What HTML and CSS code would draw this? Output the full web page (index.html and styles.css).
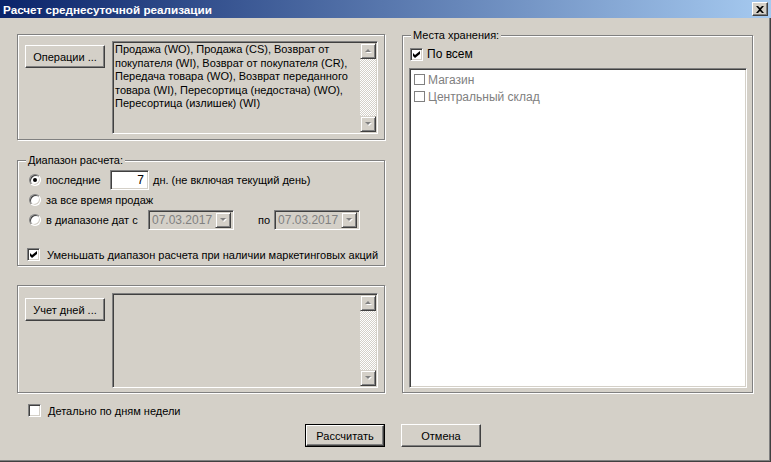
FILE: index.html
```html
<!DOCTYPE html>
<html lang="ru">
<head>
    <meta charset="UTF-8">
    <title>Расчет среднесуточной реализации</title>
    <link rel="stylesheet" href="styles.css">
</head>
<body>
<div class="window">
    <div class="titlebar">
        <span class="title">Расчет среднесуточной реализации</span>
        <span class="close">
            <svg width="8" height="7" viewBox="0 0 8 7"><path d="M0 0h2l2 2 2-2h2l-3 3.5 3 3.5h-2l-2-2-2 2h-2l3-3.5z" fill="#000"/></svg>
        </span>
    </div>

    <div class="client">
        <div class="columns">
            <div class="left">
                <!-- операции -->
                <div class="group ops">
                    <span class="btn side-btn">Операции ...</span>
                    <div class="field memo">
                        <div class="memo-text">
                            Продажа (WO), Продажа (CS), Возврат от<br>
                            покупателя (WI), Возврат от покупателя (CR),<br>
                            Передача товара (WO), Возврат переданного<br>
                            товара (WI), Пересортица (недостача) (WO),<br>
                            Пересортица (излишек) (WI)
                        </div>
                        <div class="vscroll">
                            <span class="sb-btn"><svg width="7" height="5" viewBox="0 0 7 5"><path d="M4 1l3 3H1z" fill="#fff"/><path d="M3 0l3 3H0z" fill="#808080"/></svg></span>
                            <span class="sb-track"></span>
                            <span class="sb-btn"><svg width="7" height="5" viewBox="0 0 7 5"><path d="M1 1h6L4 4z" fill="#fff"/><path d="M0 0h6L3 3z" fill="#808080"/></svg></span>
                        </div>
                    </div>
                </div>

                <!-- диапазон -->
                <div class="group range">
                    <span class="caption">Диапазон расчета:</span>
                    <div class="row">
                        <label class="opt opt-last"><span class="radio checked"></span>последние</label>
                        <span class="field days-input">7</span>
                        <span class="hint">дн. (не включая текущий день)</span>
                    </div>
                    <div class="row">
                        <label class="opt"><span class="radio"></span>за все время продаж</label>
                    </div>
                    <div class="row">
                        <label class="opt opt-dates"><span class="radio"></span>в диапазоне дат с</label>
                        <span class="field combo"><span class="combo-text">07.03.2017</span><span class="sb-btn"><svg width="7" height="5" viewBox="0 0 7 5"><path d="M1 1h6L4 4z" fill="#fff"/><path d="M0 0h6L3 3z" fill="#808080"/></svg></span></span>
                        <span class="to">по</span>
                        <span class="field combo"><span class="combo-text">07.03.2017</span><span class="sb-btn"><svg width="7" height="5" viewBox="0 0 7 5"><path d="M1 1h6L4 4z" fill="#fff"/><path d="M0 0h6L3 3z" fill="#808080"/></svg></span></span>
                    </div>
                    <label class="check-row promo">
                        <span class="chk"><svg width="7" height="7" viewBox="0 0 7 7"><path d="M0 2l2 2 5-4v3l-5 4-2-2z" fill="#000"/></svg></span>
                        Уменьшать диапазон расчета при наличии маркетинговых акций
                    </label>
                </div>

                <!-- учет дней -->
                <div class="group days">
                    <span class="btn side-btn">Учет дней ...</span>
                    <div class="field memo">
                        <div class="memo-text"></div>
                        <div class="vscroll">
                            <span class="sb-btn"><svg width="7" height="5" viewBox="0 0 7 5"><path d="M4 1l3 3H1z" fill="#fff"/><path d="M3 0l3 3H0z" fill="#808080"/></svg></span>
                            <span class="sb-track"></span>
                            <span class="sb-btn"><svg width="7" height="5" viewBox="0 0 7 5"><path d="M1 1h6L4 4z" fill="#fff"/><path d="M0 0h6L3 3z" fill="#808080"/></svg></span>
                        </div>
                    </div>
                </div>
            </div>

            <!-- места хранения -->
            <div class="group stores">
                <span class="caption">Места хранения:</span>
                <label class="check-row all">
                    <span class="chk"><svg width="7" height="7" viewBox="0 0 7 7"><path d="M0 2l2 2 5-4v3l-5 4-2-2z" fill="#000"/></svg></span>
                    По всем
                </label>
                <ul class="field store-list">
                    <li><span class="flat-chk"></span>Магазин</li>
                    <li><span class="flat-chk"></span>Центральный склад</li>
                </ul>
            </div>
        </div>

        <label class="check-row weekdays">
            <span class="chk"></span>
            Детально по дням недели
        </label>

        <div class="actions">
            <span class="btn default">Рассчитать</span>
            <span class="btn">Отмена</span>
        </div>
    </div>
</div>
</body>
</html>
```

FILE: styles.css
```css
* {
    margin: 0;
    padding: 0;
    box-sizing: border-box;
}

ul {
    list-style: none;
}

body {
    font: 11px "Liberation Sans", Arial, sans-serif;
    color: #000;
    background: #d4d0c8;
}

.window {
    width: 771px;
    height: 462px;
    background: #d4d0c8;
    box-shadow: inset -1px -1px #404040, inset -2px -2px #808080;
}

/* заголовок окна */
.titlebar {
    height: 18px;
    display: flex;
    align-items: center;
    justify-content: space-between;
    padding: 0 3px 0 3px;
    background: linear-gradient(to right, #0a246a, #a6caf0);
}

.title {
    color: #fff;
    font-weight: bold;
    font-size: 11.7px;
}

.close {
    width: 16px;
    height: 14px;
    display: flex;
    align-items: center;
    justify-content: center;
    background: #d4d0c8;
    border: 1px solid;
    border-color: #fff #404040 #404040 #fff;
    box-shadow: inset -1px -1px #808080;
}

.client {
    padding: 16px 0 0 17px;
}

.columns {
    display: flex;
    gap: 17px;
    align-items: flex-start;
}

.left {
    width: 368px;
    display: flex;
    flex-direction: column;
}

/* рамка группы */
.group {
    position: relative;
    border: 1px solid #808080;
    box-shadow: inset 1px 1px #fff, 1px 1px #fff;
}

.caption {
    position: absolute;
    top: -7px;
    left: 8px;
    padding: 0 2px;
    line-height: 13px;
    background: #d4d0c8;
}

/* кнопки */
.btn {
    display: flex;
    align-items: center;
    justify-content: center;
    width: 80px;
    height: 23px;
    background: #d4d0c8;
    border: 1px solid;
    border-color: #fff #404040 #404040 #fff;
    box-shadow: inset -1px -1px #808080;
}

.btn.default {
    width: 78px;
    height: 21px;
    margin: 1px;
    outline: 1px solid #000;
}

.side-btn {
    flex: none;
}

/* утопленное поле */
.field {
    background: #fff;
    border: 1px solid;
    border-color: #808080 #fff #fff #808080;
    box-shadow: inset 1px 1px #404040, inset -1px -1px #d4d0c8;
}

.memo {
    display: flex;
    width: 266px;
    background: #d4d0c8;
    padding: 1px;
}

.memo-text {
    flex: 1;
    padding: 0 1px;
    line-height: 13.5px;
    white-space: nowrap;
}

.vscroll {
    width: 16px;
    display: flex;
    flex-direction: column;
}

.sb-btn {
    flex: none;
    width: 16px;
    height: 16px;
    display: flex;
    align-items: center;
    justify-content: center;
    background: #d4d0c8;
    border: 1px solid;
    border-color: #d4d0c8 #404040 #404040 #d4d0c8;
    box-shadow: inset 1px 1px #fff, inset -1px -1px #808080;
}

.sb-track {
    flex: 1;
    background: repeating-conic-gradient(#fff 0 25%, #d4d0c8 0 50%) 0 0 / 2px 2px;
}

/* операции */
.ops {
    height: 106px;
    display: flex;
    align-items: flex-start;
    gap: 7px;
    padding: 6px 0 0 7px;
}

.ops .side-btn {
    margin-top: 4px;
}

.ops .memo {
    height: 93px;
}

/* диапазон расчета */
.range {
    height: 106px;
    margin-top: 20px;
    padding: 9px 0 0 11px;
}

.row {
    display: flex;
    align-items: center;
    height: 20px;
}

.opt {
    display: flex;
    align-items: center;
    gap: 5px;
}

.opt-last {
    width: 81px;
}

.opt-dates {
    width: 119px;
}

.radio {
    position: relative;
    width: 12px;
    height: 12px;
    border-radius: 50%;
    background: #fff;
    border: 1px solid;
    border-color: #808080 #fff #fff #808080;
    box-shadow: inset 1px 1px #404040, inset -1px -1px #d4d0c8;
}

.radio.checked::after {
    content: "";
    position: absolute;
    left: 3px;
    top: 3px;
    width: 4px;
    height: 4px;
    border-radius: 50%;
    background: #000;
}

.days-input {
    width: 39px;
    height: 20px;
    padding-right: 4px;
    line-height: 18px;
    text-align: right;
    font-size: 12px;
}

.hint {
    margin-left: 4px;
}

.combo {
    display: flex;
    align-items: center;
    width: 86px;
    height: 20px;
    padding: 2px;
    background: #d4d0c8;
    color: #808080;
}

.combo-text {
    flex: 1;
    padding-left: 1px;
    font-size: 12px;
}

.to {
    margin: 0 4px 0 24px;
}

.check-row {
    display: flex;
    align-items: center;
    gap: 7px;
}

.chk {
    flex: none;
    width: 13px;
    height: 13px;
    display: flex;
    align-items: center;
    justify-content: center;
    background: #fff;
    border: 1px solid;
    border-color: #808080 #fff #fff #808080;
    box-shadow: inset 1px 1px #404040, inset -1px -1px #d4d0c8;
}

.promo {
    margin: 18px 0 0 -2px;
    white-space: nowrap;
}

/* учет дней */
.days {
    height: 108px;
    margin-top: 19px;
    display: flex;
    align-items: flex-start;
    gap: 7px;
    padding: 7px 0 0 7px;
}

.days .side-btn {
    margin-top: 5px;
}

.days .memo {
    height: 95px;
}

/* места хранения */
.stores {
    width: 351px;
    height: 358px;
    margin-top: 1px;
    padding: 11px 0 0 6px;
}

.all {
    margin-left: 1px;
    gap: 4px;
    font-size: 12px;
}

.store-list {
    margin-top: 7px;
    width: 338px;
    height: 320px;
    padding: 2px 0 0 4px;
    color: #808080;
}

.store-list li {
    display: flex;
    align-items: center;
    gap: 3px;
    height: 17px;
    font-size: 12px;
}

.flat-chk {
    width: 11px;
    height: 11px;
    border: 1px solid #808080;
    background: #fff;
}

/* низ окна */
.weekdays {
    margin: 11px 0 0 11px;
}

.actions {
    display: flex;
    gap: 16px;
    margin-top: 7px;
    padding-left: 288px;
}
```
